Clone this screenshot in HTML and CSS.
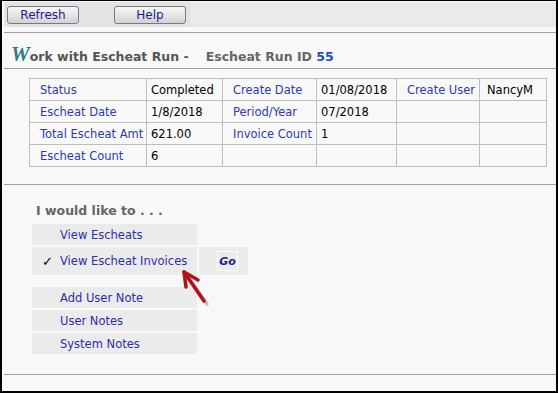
FILE: index.html
```html
<!DOCTYPE html>
<html lang="en">

<head>
  <meta charset="UTF-8">
  <title>Work with Escheat Run</title>
  <link rel="stylesheet" href="styles.css">
</head>

<body>
  <div class="frame">
    <div class="toolbar">
      <div class="btn-group">
        <button class="btn">Refresh</button>
        <button class="btn">Help</button>
      </div>
    </div>

    <div class="title-bar">
      <span class="title-w">W</span>ork with Escheat Run -<span class="run-id">Escheat Run ID <span class="run-num">55</span></span>
    </div>

    <div class="details">
      <table>
        <colgroup>
          <col style="width:117px">
          <col style="width:76px">
          <col style="width:94px">
          <col style="width:80px">
          <col style="width:83px">
          <col style="width:67px">
        </colgroup>
        <tr>
          <td class="label">Status</td>
          <td>Completed</td>
          <td class="label">Create Date</td>
          <td>01/08/2018</td>
          <td class="label">Create User</td>
          <td class="user">NancyM</td>
        </tr>
        <tr>
          <td class="label">Escheat Date</td>
          <td>1/8/2018</td>
          <td class="label">Period/Year</td>
          <td>07/2018</td>
          <td></td>
          <td></td>
        </tr>
        <tr>
          <td class="label">Total Escheat Amt</td>
          <td>621.00</td>
          <td class="label">Invoice Count</td>
          <td>1</td>
          <td></td>
          <td></td>
        </tr>
        <tr>
          <td class="label">Escheat Count</td>
          <td>6</td>
          <td></td>
          <td></td>
          <td></td>
          <td></td>
        </tr>
      </table>
    </div>

    <div class="actions">
      <div class="actions-title">I would like to . . .</div>
      <div class="menu">
        <div class="menu-row">
          <div class="menu-item">View Escheats</div>
        </div>
        <div class="menu-row current">
          <div class="menu-item"><span class="check">&#10003;</span>View Escheat Invoices</div>
          <div class="go-cell"><button class="go-btn">Go</button></div>
        </div>
        <div class="menu-row gap">
          <div class="menu-item">Add User Note</div>
        </div>
        <div class="menu-row">
          <div class="menu-item">User Notes</div>
        </div>
        <div class="menu-row">
          <div class="menu-item">System Notes</div>
        </div>
      </div>
    </div>

    <!-- callout arrow pointing at the selected option -->
    <svg class="arrow" width="48" height="48" viewBox="0 0 48 48">
      <g stroke="#8c8c8c" stroke-width="3.5" fill="none" stroke-linecap="round" opacity="0.55" transform="translate(2,2)">
        <line x1="12" y1="10" x2="31" y2="37" />
      </g>
      <g stroke="#b3101a" stroke-width="3.5" fill="none" stroke-linecap="round" stroke-linejoin="round">
        <line x1="10" y1="7" x2="30" y2="36" />
        <polyline points="24,15 10,7 12,22" />
      </g>
    </svg>
  </div>
</body>

</html>
```

FILE: styles.css
```css
body {
  margin: 0;
  font-family: "DejaVu Sans", Verdana, sans-serif;
}

.frame {
  position: relative;
  width: 558px;
  height: 393px;
  box-sizing: border-box;
  border: solid #000;
  border-width: 1px 2px 2px 2px;
  background-color: #f8f8f8;
}

.toolbar {
  display: flex;
  height: 25px;
  margin: 1px 0 0 2px;
  background-color: #eaeaea;
}

.btn-group {
  display: flex;
  gap: 35px;
  padding: 4px 4px 0 3px;
  background-color: #e3e3e3;
}

.btn {
  width: 72px;
  height: 18px;
  padding: 0;
  box-sizing: border-box;
  border: 1px solid #7a7a7a;
  border-radius: 3px;
  background: linear-gradient(#f7f7f7, #d2d2d2);
  color: #1c1c96;
  font-family: "DejaVu Sans", Verdana, sans-serif;
  font-size: 12px;
}

.title-bar {
  height: 29px;
  margin: 5px 0 0 2px;
  padding: 6px 0 0 7px;
  border-top: 1px solid #a0a0a0;
  border-bottom: 1px solid #a0a0a0;
  color: #555;
  font-size: 12.5px;
  font-weight: bold;
  line-height: 36px;
  white-space: nowrap;
}

.title-w {
  color: #2f7d7a;
  font-family: "Liberation Serif", serif;
  font-style: italic;
  font-size: 21px;
  line-height: 0;
}

.run-id {
  margin-left: 17px;
  color: #666;
}

.run-num {
  color: #1a4fc0;
}

.details {
  padding: 9px 0 0 27px;
}

table {
  border-collapse: collapse;
  table-layout: fixed;
  width: 517px;
}

td {
  height: 21px;
  padding: 0 4px;
  border: 1px solid #bdbdbd;
  color: #000;
  font-size: 11.5px;
  white-space: nowrap;
  overflow: hidden;
}

td.label {
  padding-left: 10px;
  color: #2d3ab3;
}

td.user {
  padding-left: 7px;
}

.actions {
  margin: 17px 0 0 2px;
  padding: 18px 0 18px 28px;
  border-top: 1px solid #a0a0a0;
  border-bottom: 1px solid #a0a0a0;
}

.actions-title {
  height: 16px;
  padding-left: 4px;
  color: #666;
  font-size: 12.5px;
  font-weight: bold;
  line-height: 16px;
}

.menu {
  margin-top: 5px;
}

.menu-row {
  display: flex;
  gap: 2px;
  height: 21px;
  margin-bottom: 2px;
}

.menu-row.current {
  height: 28px;
}

.menu-row.gap {
  margin-top: 12px;
}

.menu-item {
  display: flex;
  align-items: center;
  width: 165px;
  box-sizing: border-box;
  padding-left: 28px;
  background-color: #ebebeb;
  color: #2d2db0;
  font-size: 11.5px;
}

.check {
  width: 18px;
  margin-left: -18px;
  color: #000;
  font-size: 13px;
}

.go-cell {
  display: flex;
  align-items: center;
  width: 49px;
  box-sizing: border-box;
  padding-left: 18px;
  background-color: #ebebeb;
}

.go-btn {
  width: 21px;
  height: 20px;
  padding: 0;
  border: 1px solid #fff;
  background-color: #ebebeb;
  color: #1c1c8c;
  font-family: "DejaVu Sans", Verdana, sans-serif;
  font-size: 11px;
  font-weight: bold;
  font-style: italic;
}

.arrow {
  position: absolute;
  left: 172px;
  top: 264px;
}
```
